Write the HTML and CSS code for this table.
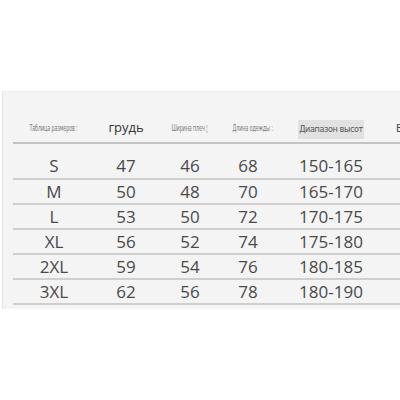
FILE: index.html
```html
<!DOCTYPE html>
<html lang="ru">
<head>
<meta charset="utf-8">
<link rel="stylesheet" href="styles.css">
</head>
<body>
<div class="panel">
  <div class="table">
    <div class="row head">
      <div class="cell"><span class="tiny">Таблица размеров :</span></div>
      <div class="cell"><span class="hbig">грудь</span></div>
      <div class="cell"><span class="tiny">Ширина плеч ¦</span></div>
      <div class="cell"><span class="tiny">Длина одежды :</span></div>
      <div class="cell"><span class="hbox">Диапазон высот</span></div>
      <div class="cell cut"><span class="hcut">Б</span></div>
    </div>
    <div class="row first">
      <div class="cell">S</div><div class="cell">47</div><div class="cell">46</div><div class="cell">68</div><div class="cell">150-165</div><div class="cell"></div>
    </div>
    <div class="row">
      <div class="cell">M</div><div class="cell">50</div><div class="cell">48</div><div class="cell">70</div><div class="cell">165-170</div><div class="cell"></div>
    </div>
    <div class="row">
      <div class="cell">L</div><div class="cell">53</div><div class="cell">50</div><div class="cell">72</div><div class="cell">170-175</div><div class="cell"></div>
    </div>
    <div class="row">
      <div class="cell">XL</div><div class="cell">56</div><div class="cell">52</div><div class="cell">74</div><div class="cell">175-180</div><div class="cell"></div>
    </div>
    <div class="row">
      <div class="cell">2XL</div><div class="cell">59</div><div class="cell">54</div><div class="cell">76</div><div class="cell">180-185</div><div class="cell"></div>
    </div>
    <div class="row">
      <div class="cell">3XL</div><div class="cell">62</div><div class="cell">56</div><div class="cell">78</div><div class="cell">180-190</div><div class="cell"></div>
    </div>
  </div>
</div>
</body>
</html>
```
FILE: styles.css
```css
html, body {
  margin: 0;
  padding: 0;
  background: #ffffff;
  width: 400px;
  height: 400px;
  overflow: hidden;
}
.panel {
  margin-top: 91px;
  margin-left: 2px;
  height: 218px;
  background: #f4f4f4;
  border-left: 1px solid #e3e3e3;
  border-top: 1px solid #ededed;
  box-sizing: border-box;
  padding-left: 10px;
}
.table {
  display: flex;
  flex-direction: column;
}
.row {
  display: grid;
  grid-template-columns: 82px 62px 66px 50px 116px 1fr;
  align-items: center;
  height: 25px;
  box-sizing: border-box;
  border-bottom: 2px solid #cfcfcf;
  font-family: "Open Sans", sans-serif;
  font-size: 17px;
  color: #4a4a4a;
}
.row.head {
  height: 52px;
  padding-top: 19px;
  border-bottom-color: #c4c4c4;
}
.row.first {
  height: 36px;
  padding-top: 8px;
}
.cell {
  text-align: center;
  white-space: nowrap;
  line-height: 23px;
}
.tiny {
  display: inline-block;
  font-family: "DejaVu Sans Condensed", "DejaVu Sans", sans-serif;
  font-size: 8px;
  color: #7a7a7a;
  letter-spacing: -0.2px;
  transform: scaleX(0.68);
}
.hbig {
  font-family: "Open Sans", sans-serif;
  font-size: 13px;
  color: #333;
}
.hbox {
  display: inline-block;
  background: #e2e2e2;
  font-family: "DejaVu Sans Condensed", "DejaVu Sans", sans-serif;
  font-size: 9px;
  color: #555;
  line-height: 19px;
  padding: 0 1px;
  letter-spacing: -0.4px;
}
.cut {
  text-align: left;
  padding-left: 7px;
}
.hcut {
  font-family: "DejaVu Sans Condensed", sans-serif;
  font-size: 11px;
  color: #444;
}
```
